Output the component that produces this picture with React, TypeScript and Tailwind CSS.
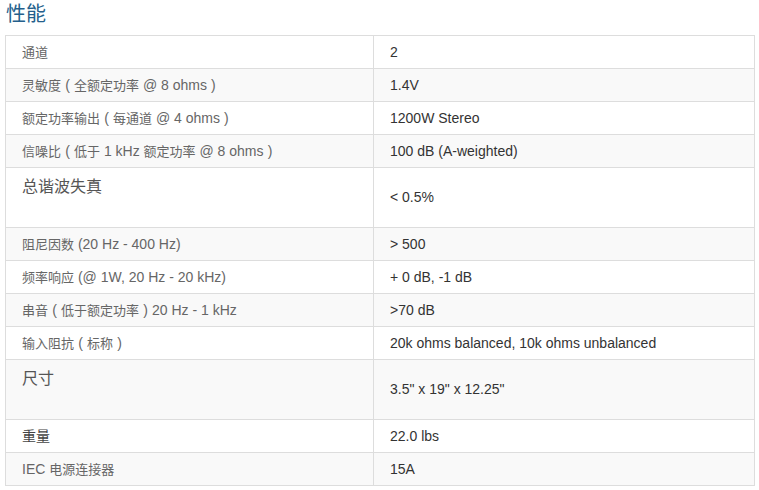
import React from "react";

type Row = { label: string; value: string; kind?: "tall" | "mid" };

const rows: Row[] = [
  { label: "通道", value: "2" },
  { label: "灵敏度（全额定功率 @ 8 ohms）", value: "1.4V" },
  { label: "额定功率输出（每通道 @ 4 ohms）", value: "1200W Stereo" },
  { label: "信噪比（低于 1 kHz 额定功率 @ 8 ohms）", value: "100 dB (A-weighted)" },
  { label: "总谐波失真", value: "< 0.5%", kind: "tall" },
  { label: "阻尼因数 (20 Hz - 400 Hz)", value: "> 500" },
  { label: "频率响应 (@ 1W, 20 Hz - 20 kHz)", value: "+ 0 dB, -1 dB" },
  { label: "串音（低于额定功率）20 Hz - 1 kHz", value: ">70 dB" },
  { label: "输入阻抗（标称）", value: "20k ohms balanced, 10k ohms unbalanced" },
  { label: "尺寸", value: "3.5\" x 19\" x 12.25\"", kind: "tall" },
  { label: "重量", value: "22.0 lbs", kind: "mid" },
  { label: "IEC 电源连接器", value: "15A" },
];

const font = { fontFamily: '"Liberation Sans", "Noto Sans CJK SC", sans-serif' };

function Label({ text }: { text: string }) {
  const parts = text.split(/([（）]|[\u4e00-\u9fff]+)/).filter((p) => p.length > 0);
  return (
    <>
      {parts.map((p, i) => {
        if (p === "（") return <span key={i} className="inline-block w-[13px] text-center">(</span>;
        if (p === "）") return <span key={i} className="inline-block w-[13px] text-center">)</span>;
        if (/[\u4e00-\u9fff]/.test(p)) return <span key={i} className="text-[13px]">{p}</span>;
        return <span key={i}>{p}</span>;
      })}
    </>
  );
}

export default function App() {
  return (
    <div className="w-[759px] h-[490px] bg-white overflow-hidden" style={font}>
      <div className="h-[35px] pl-[6px] text-[20px] leading-[28px] text-[#245f8c]">性能</div>
      <div className="ml-[5px] w-[750px] border border-[#dddddd]">
        {rows.map((r, i) => {
          const tall = r.kind === "tall";
          const h = i === 0 ? "h-[32px]" : tall ? "h-[60px]" : "h-[33px]";
          return (
            <div
              key={i}
              className={`grid grid-cols-[368px_1fr] ${h} ${i > 0 ? "border-t border-[#dddddd]" : ""} ${
                i % 2 === 1 ? "bg-[#f9f9f9]" : "bg-white"
              }`}
            >
              <div
                className={`border-r border-[#dddddd] pl-4 ${
                  tall
                    ? "pt-[9px] text-[16px] leading-[20px] text-[#555555]"
                    : r.kind === "mid"
                    ? "flex items-center text-[14px] text-[#444444]"
                    : "flex items-center whitespace-pre text-[14px] text-[#666666]"
                }`}
              >
                {tall || r.kind === "mid" ? r.label : <span className="whitespace-pre"><Label text={r.label} /></span>}
              </div>
              <div className="flex items-center pl-4 text-[14px] text-[#333333]">{r.value}</div>
            </div>
          );
        })}
      </div>
    </div>
  );
}
